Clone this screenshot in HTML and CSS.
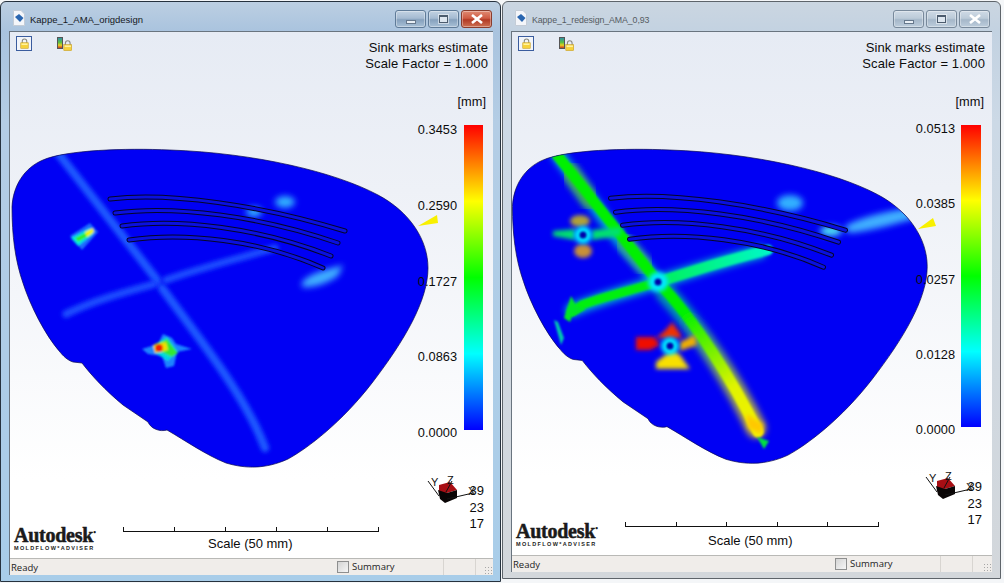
FILE: index.html
```html
<!DOCTYPE html>
<html lang="en">
<head>
<meta charset="utf-8">
<title>Sink marks estimate</title>
<link rel="stylesheet" href="styles.css">
</head>
<body>
<svg class="defs" aria-hidden="true">
  <defs>
    <path id="part" d="M12 207C13 186 24 168 43 160C66 150 125 148 170 150C255 153 335 172 378 195C410 212 428 240 428 268C428 300 405 340 372 383C342 422 308 448 288 459C266 469 246 469 226 463C206 455 186 441 167 430C160 432 151 429 148 422L123 405C105 390 92 376 82 363L73 362C66 360 60 352 60 352C45 335 30 305 23 283C15 260 12 235 12 207Z"/>
    <g id="slots">
      <path d="M110 199C170 192 260 205 345 231"/>
      <path d="M115 213C175 205 260 216 338 243"/>
      <path d="M122 226C180 218 260 228 331 256"/>
      <path d="M129 240C185 232 260 240 323 268"/>
    </g>
    <clipPath id="clip-a"><use href="#part"/></clipPath>
    <clipPath id="clip-b"><use href="#part" transform="translate(500.5 1.8) scale(.997 .988)"/></clipPath>
    <filter id="b1" x="-30%" y="-30%" width="160%" height="160%"><feGaussianBlur stdDeviation="1"/></filter>
    <filter id="b15" x="-30%" y="-30%" width="160%" height="160%"><feGaussianBlur stdDeviation="2"/></filter>
    <filter id="b2" x="-30%" y="-30%" width="160%" height="160%"><feGaussianBlur stdDeviation="2"/></filter>
    <filter id="b3" x="-30%" y="-30%" width="160%" height="160%"><feGaussianBlur stdDeviation="3"/></filter>
    <linearGradient id="lower" gradientUnits="userSpaceOnUse" x1="680" y1="315" x2="760" y2="440">
      <stop offset="0" stop-color="#00f000"/>
      <stop offset=".3" stop-color="#70f000"/>
      <stop offset=".6" stop-color="#e0f400"/>
      <stop offset="1" stop-color="#f8f000"/>
    </linearGradient>
    <linearGradient id="lowerhalo" gradientUnits="userSpaceOnUse" x1="680" y1="315" x2="760" y2="440">
      <stop offset="0" stop-color="#0090b0"/>
      <stop offset=".5" stop-color="#80a060"/>
      <stop offset="1" stop-color="#c8a840"/>
    </linearGradient>
    <linearGradient id="arm" gradientUnits="userSpaceOnUse" x1="650" y1="285" x2="770" y2="250">
      <stop offset="0" stop-color="#00f050"/>
      <stop offset="1" stop-color="#00f8c8"/>
    </linearGradient>
    <symbol id="lock" viewBox="0 0 12 14">
      <path d="M3 7V4a3 3 0 0 1 6 0v3" fill="none" stroke="#8a8a80" stroke-width="1.400"/>
      <rect x="1" y="6" width="10" height="7.500" fill="#f6d23c" stroke="#c49a20" stroke-width=".7"/>
      <rect x="2" y="7" width="8" height="2" fill="#fff2a0"/>
    </symbol>
    <symbol id="doc" viewBox="0 0 12 16">
      <path d="M.5.5H8L11.5 4V15.500H.5Z" fill="#f4f6fa" stroke="#c4ccd6"/>
      <path d="M2 7L6 4L10.500 8L7 12Z" fill="#2a66b0"/>
    </symbol>
    <linearGradient id="iconbar" x1="0" y1="0" x2="0" y2="1">
      <stop offset="0" stop-color="#2a8ab0"/>
      <stop offset=".45" stop-color="#5cc040"/>
      <stop offset=".7" stop-color="#e8d020"/>
      <stop offset="1" stop-color="#c02020"/>
    </linearGradient>
    <symbol id="lockbar" viewBox="0 0 16 14">
      <rect x=".5" y=".5" width="5" height="11" fill="url(#iconbar)" stroke="#555"/>
      <use href="#lock" x="6" y="3" width="9.500" height="11"/>
    </symbol>
    <symbol id="cross" viewBox="0 0 14 10">
      <path d="M2 1L12 9M12 1L2 9" fill="none" stroke="#fff" stroke-width="2.600"/>
    </symbol>
    <g id="triad">
      <path d="M439 485L450 482L457 490L447 493L439 493Z" fill="#a80e14"/>
      <path d="M438 490L447 493L457 490L457 498L445 503L440 499Z" fill="#0a0505"/>
      <g class="axes">
        <path d="M428 481L439 496M446 492L452 481M447 499L473 493"/>
      </g>
      <text class="axis-label" x="431" y="486">Y</text>
      <text class="axis-label" x="447" y="484">Z</text>
      <text class="axis-label" x="468" y="495">X</text>
    </g>
  </defs>
</svg>

<section class="window win-a">
  <header class="titlebar">
    <svg class="doc-icon"><use href="#doc"/></svg>
    <span class="title">Kappe_1_AMA_origdesign</span>
    <div class="caption-buttons">
      <span class="cap-btn"><i class="glyph-min"></i></span>
      <span class="cap-btn"><i class="glyph-max"></i></span>
      <span class="cap-btn cap-close"><svg class="glyph-x"><use href="#cross"/></svg></span>
    </div>
  </header>
  <div class="client">
    <div class="plot">
      <svg class="model" viewBox="10 32 483 526">
        <use href="#part" fill="#0000f4"/>
        <g clip-path="url(#clip-a)">
          <g fill="none" stroke-linecap="round">
            <path filter="url(#b2)" d="M58 153L157 280M162 288C200 340 245 395 265 448" stroke="#1f58ff" stroke-width="8.500"/>
            <path filter="url(#b2)" d="M66 314C95 300 125 292 154 284M166 280C200 268 240 258 275 248" stroke="#1a4eff" stroke-width="7.500"/>
          </g>
          <g filter="url(#b3)">
            <ellipse cx="285" cy="202" rx="10" ry="6" fill="#30b0ff"/>
            <ellipse cx="254" cy="212" rx="8" ry="5" fill="#30b0ff"/>
            <path d="M302 282C312 272 325 270 343 265L338 276C325 285 312 288 302 287Z" fill="#40b0ff"/>
          </g>
          <g filter="url(#b1)">
            <path d="M70 236L90 223L98 232L82 250Z" fill="#1d6cff"/>
            <path d="M71 238L90 228L93 234L78 246Z" fill="#00e8e0"/>
            <path d="M75 238L91 230L92 234L78 242Z" fill="#30f020"/>
            <path d="M85 232L93 228L94 232L87 237Z" fill="#f0f400"/>
          </g>
          <g filter="url(#b1)">
            <path d="M142 349L158 344L163 334L172 338L176 344L192 349L177 352L174 366L166 368L162 356L148 354Z" fill="#1f84ff"/>
            <path d="M153 346L167 337L177 351L168 361L157 354Z" fill="#00d8e0"/>
            <path d="M155 344L167 339L178 353L172 357L160 351Z" fill="#30e830"/>
            <path d="M153 345L166 342L168 350L155 353Z" fill="#f0e000"/>
            <circle cx="159" cy="348" r="4" fill="#f02000"/>
          </g>
        </g>
        <use href="#part" fill="none" stroke="#0a0a50" stroke-width=".7"/>
        <use href="#slots" fill="none" stroke="#05052a" stroke-width="5" stroke-linecap="round"/>
        <use href="#slots" fill="none" stroke="#0a10e0" stroke-width="3" stroke-linecap="round"/>
        <polygon points="418,226 437,215 438,223" fill="#f8f000"/>
        <g class="scale-line">
          <path d="M123 527V531H378V527M174 527V531M225 527V531M276 527V531M327 527V531"/>
        </g>
        <use href="#triad"/>
      </svg>
      <div class="captions">
        <span>Sink marks estimate</span>
        <span>Scale Factor = 1.000</span>
      </div>
      <div class="legend">
        <span class="unit">[mm]</span>
        <div class="legend-body">
          <div class="ticks"><span>0.3453</span><span>0.2590</span><span>0.1727</span><span>0.0863</span><span>0.0000</span></div>
          <div class="ramp"></div>
        </div>
      </div>
      <div class="tools">
        <span class="tool tool-active"><svg class="tool-lock"><use href="#lock"/></svg></span>
        <span class="tool"><svg class="tool-bar"><use href="#lockbar"/></svg></span>
      </div>
      <div class="logo"><span class="logo-main">Autodesk<sup>•</sup></span><span class="logo-sub">MOLDFLOW*ADVISER</span></div>
      <div class="scale-text">Scale (50 mm)</div>
      <div class="coords"><span>39</span><span>23</span><span>17</span></div>
    </div>
    <footer class="status">
      <span class="ready">Ready</span>
      <label class="summary"><i class="check"></i>Summary</label>
      <i class="pane pane-1"></i>
      <i class="pane pane-2"></i>
      <i class="grip"></i>
    </footer>
  </div>
</section>

<section class="window win-b">
  <header class="titlebar">
    <svg class="doc-icon"><use href="#doc"/></svg>
    <span class="title">Kappe_1_redesign_AMA_0,93</span>
    <div class="caption-buttons">
      <span class="cap-btn"><i class="glyph-min"></i></span>
      <span class="cap-btn"><i class="glyph-max"></i></span>
      <span class="cap-btn"><svg class="glyph-x"><use href="#cross"/></svg></span>
    </div>
  </header>
  <div class="client">
    <div class="plot">
      <svg class="model" viewBox="512 32 480 523">
        <use href="#part" fill="#0000f4" transform="translate(500.5 1.8) scale(.997 .988)"/>
        <g clip-path="url(#clip-b)">
          <g fill="none" stroke-linecap="round">
            <path filter="url(#b3)" d="M558 155L620 240L658 282M760 252C720 262 690 272 658 282C625 292 595 300 572 310" stroke="#00a0d0" stroke-width="14"/>
            <path filter="url(#b3)" d="M570 172L590 200" stroke="#40a060" stroke-width="18"/>
            <path filter="url(#b3)" d="M624 242L645 266" stroke="#30a090" stroke-width="17"/>
            <path filter="url(#b3)" d="M665 292C700 330 735 385 756 428" stroke="url(#lowerhalo)" stroke-width="20"/>
            <path filter="url(#b1)" d="M557 155L658 282" stroke="#00f000" stroke-width="10.500"/>
            <path filter="url(#b1)" d="M658 282C695 320 735 385 758 432" stroke="url(#lower)" stroke-width="11"/>
            <path filter="url(#b1)" d="M768 250C725 260 690 272 658 282" stroke="url(#arm)" stroke-width="10.500"/>
            <path filter="url(#b1)" d="M658 282C625 292 600 298 582 305L572 312" stroke="#00f010" stroke-width="9"/>
          </g>
          <g filter="url(#b1)">
            <path d="M564 318L571 296L576 305L586 309L572 316L570 322Z" fill="#00e820"/>
            <path d="M554 320L558 322L564 338L561 345Z" fill="#00c8b0"/>
            <path d="M757 437L769 441L764 449Z" fill="#00e040"/>
          </g>
          <path d="M746 414L763 424L762 434L748 428Z" fill="#ffc800" filter="url(#b2)"/>
          <g filter="url(#b3)">
            <ellipse cx="790" cy="203" rx="13" ry="8" fill="#30b0ff"/>
            <ellipse cx="831" cy="231" rx="11" ry="5" fill="#50e8f0"/>
            <path d="M845 226C865 215 895 209 922 207L926 216C900 222 870 232 848 233Z" fill="#40b0ff"/>
          </g>
          <g filter="url(#b2)">
            <ellipse cx="580" cy="221" rx="10" ry="6" fill="#b0a038"/>
            <ellipse cx="583" cy="251" rx="9" ry="7" fill="#c89038"/>
            <path d="M553 231L575 229V240L553 236Z" fill="#00e070"/>
            <path d="M592 230L622 227L620 236L592 240Z" fill="#00e070"/>
          </g>
          <g filter="url(#b15)">
            <path d="M656 338C664 332 668 328 672 322C676 328 680 332 682 338Z" fill="#f03000"/>
            <path d="M636 337L654 337L660 345L650 350L636 350Z" fill="#f01000"/>
            <path d="M656 362L672 350L680 355L690 369H656Z" fill="#f8e000"/>
            <path d="M680 342L695 335L697 345L680 351Z" fill="#f0b000"/>
          </g>
          <circle cx="583" cy="235" r="9" fill="#00e8ff" filter="url(#b2)"/>
          <circle cx="583" cy="235" r="3.500" fill="#0000a8" filter="url(#b1)"/>
          <circle cx="658" cy="282" r="10" fill="#00e8ff" filter="url(#b2)"/>
          <circle cx="658" cy="282" r="3.500" fill="#0000a8" filter="url(#b1)"/>
          <circle cx="670" cy="346" r="9" fill="#00e8ff" filter="url(#b2)"/>
          <circle cx="670" cy="346" r="3.500" fill="#0000a8" filter="url(#b1)"/>
        </g>
        <use href="#part" fill="none" stroke="#0a0a50" stroke-width=".7" transform="translate(500.5 1.8) scale(.997 .988)"/>
        <g transform="translate(500.5 -.8)">
          <use href="#slots" fill="none" stroke="#05052a" stroke-width="5" stroke-linecap="round"/>
          <use href="#slots" fill="none" stroke="#0a10e0" stroke-width="3" stroke-linecap="round"/>
        </g>
        <polygon points="918,229 933,218 936,226" fill="#f8f000"/>
        <g class="scale-line">
          <path d="M625 522V526H878V522M676 522V526M726 522V526M777 522V526M827 522V526"/>
        </g>
        <use href="#triad" transform="translate(498 -4)"/>
      </svg>
      <div class="captions">
        <span>Sink marks estimate</span>
        <span>Scale Factor = 1.000</span>
      </div>
      <div class="legend">
        <span class="unit">[mm]</span>
        <div class="legend-body">
          <div class="ticks"><span>0.0513</span><span>0.0385</span><span>0.0257</span><span>0.0128</span><span>0.0000</span></div>
          <div class="ramp"></div>
        </div>
      </div>
      <div class="tools">
        <span class="tool tool-active"><svg class="tool-lock"><use href="#lock"/></svg></span>
        <span class="tool"><svg class="tool-bar"><use href="#lockbar"/></svg></span>
      </div>
      <div class="logo"><span class="logo-main">Autodesk<sup>•</sup></span><span class="logo-sub">MOLDFLOW*ADVISER</span></div>
      <div class="scale-text">Scale (50 mm)</div>
      <div class="coords"><span>39</span><span>23</span><span>17</span></div>
    </div>
    <footer class="status">
      <span class="ready">Ready</span>
      <label class="summary"><i class="check"></i>Summary</label>
      <i class="pane pane-1"></i>
      <i class="pane pane-2"></i>
      <i class="grip"></i>
    </footer>
  </div>
</section>
</body>
</html>
```
FILE: styles.css
```css
html, body {
  margin: 0;
  height: 100%;
  overflow: hidden;
  background: #f4f6f8;
  font-family: "Liberation Sans", Arial, sans-serif;
}
.defs { position: absolute; width: 0; height: 0; }

.window {
  position: absolute;
  top: 1px;
  box-sizing: border-box;
  display: flex;
  flex-direction: column;
  border: 1px solid #26323e;
  border-radius: 6px 6px 0 0;
}
.win-a {
  left: 0;
  width: 501px;
  height: 581px;
  background: linear-gradient(#bccfe2 0, #a9c3de 30px, #b4cde5 120px, #a8cde9 100%);
}
.win-b {
  left: 502px;
  width: 499px;
  height: 578px;
  border-color: #5e646a;
  background: linear-gradient(#cbd6e1 0, #c3d2e1 30px, #ccd9e6 120px, #d3d7db 100%);
}
.win-b .title { color: #555b62; font-size: 8.800px; letter-spacing: -.1px; }

.titlebar {
  flex: none;
  height: 29px;
  display: flex;
  align-items: flex-start;
  padding-left: 12px;
  color: #15191e;
  font-size: 9.500px;
}
.doc-icon { width: 12px; height: 16px; margin-top: 8px; }
.title { margin: 11px 0 0 5px; line-height: 14px; }
.caption-buttons {
  margin-left: auto;
  display: flex;
  gap: 2px;
  margin-top: 8px;
  margin-right: 8px;
}
.win-b .caption-buttons { margin-right: 10px; }
.cap-btn {
  box-sizing: border-box;
  width: 31px;
  height: 18px;
  display: flex;
  align-items: center;
  justify-content: center;
  border: 1px solid #5f7b98;
  border-radius: 3px;
  box-shadow: inset 0 0 0 1px rgba(255, 255, 255, .35);
  background: linear-gradient(#c2d2e2, #a5bbd2 45%, #86a1bd 55%, #a8c0d6);
}
.win-b .cap-btn {
  background: linear-gradient(#cfdae5, #bccbd9 45%, #a5b7c9 55%, #bdcddc);
  border-color: #78899b;
}
.cap-close {
  border-color: #8a3c2c;
  background: linear-gradient(#e08a72, #cf5c44 45%, #b23a24 55%, #cd7052);
}
.glyph-min {
  display: block;
  width: 8px;
  height: 2px;
  margin-top: 6px;
  background: #e9eff5;
  border: 1px solid #66788c;
}
.glyph-max {
  box-sizing: border-box;
  display: block;
  width: 9px;
  height: 8px;
  border: 1px solid #4c5c6e;
  border-top-width: 2px;
  background: #dde6ef;
  box-shadow: 0 0 0 1px rgba(255, 255, 255, .5);
}
.glyph-x { width: 14px; height: 10px; }

.client {
  flex: none;
  margin: 0 7px 0 8px;
  height: 544px;
  display: flex;
  flex-direction: column;
  box-sizing: border-box;
  border-left: 1px solid #69747f;
  border-top: 1px solid #69747f;
}
.win-b .client { margin-right: 8px; height: 541px; }

.plot {
  position: relative;
  flex: 1;
  overflow: hidden;
  color: #0c0c0c;
  background: linear-gradient(#e6ebf4, #eef1f7 30%, #fff 85%);
}
.model { position: absolute; inset: 0; width: 100%; height: 100%; }
.scale-line path { fill: none; stroke: #111; stroke-width: 1; shape-rendering: crispEdges; }
.axes path { fill: none; stroke: #111; stroke-width: 1; }
.axis-label { font-family: "Liberation Sans", sans-serif; font-size: 11px; fill: #111; }

.captions {
  position: absolute;
  top: 8px;
  right: 5px;
  display: flex;
  flex-direction: column;
  align-items: flex-end;
  font-size: 13px;
  letter-spacing: .12px;
  line-height: 16px;
}
.win-b .captions { right: 7px; line-height: 15.500px; }

.legend {
  position: absolute;
  top: 63px;
  right: 10px;
  display: flex;
  flex-direction: column;
  align-items: flex-end;
  font-size: 12.800px;
  line-height: 14px;
}
.win-b .legend { right: 11px; top: 63px; }
.unit { position: relative; right: -3px; height: 16px; }
.legend-body { display: flex; align-items: flex-start; gap: 7px; margin-top: 14px; }
.win-b .legend-body { gap: 6px; }
.ticks {
  height: 317px;
  margin-top: -2px;
  display: flex;
  flex-direction: column;
  justify-content: space-between;
  align-items: flex-end;
}
.win-b .ticks { height: 315px; margin-top: -3px; }
.ramp {
  width: 19px;
  height: 305px;
  background: linear-gradient(#f00 0, #ff0 25%, #0f0 50%, #0ff 75%, #00f 100%);
}
.win-b .ramp { width: 20px; height: 302px; }

.tools {
  position: absolute;
  top: 4px;
  left: 6px;
  display: flex;
  gap: 25px;
  align-items: flex-start;
}
.tool { display: flex; align-items: center; justify-content: center; width: 16px; height: 15px; box-sizing: border-box; }
.tool-active { border: 1px solid #3a5c9e; background: #f2f5fa; }
.tool-lock { width: 9px; height: 11px; }
.tool-bar { width: 16px; height: 14px; }

.logo {
  position: absolute;
  left: 4px;
  top: 494px;
  display: flex;
  flex-direction: column;
  color: #1a1a1a;
}
.win-b .logo { top: 490px; }
.logo-main {
  font-family: "Liberation Serif", serif;
  font-weight: 700;
  font-size: 20px;
  line-height: 18px;
  letter-spacing: -.25px;
  -webkit-text-stroke: .5px #1a1a1a;
}
.logo-main sup { font-size: 8px; line-height: 0; vertical-align: 7px; letter-spacing: 0; -webkit-text-stroke: 0; }
.logo-sub {
  font-size: 5.500px;
  font-weight: 700;
  line-height: 8px;
  letter-spacing: 1.350px;
}

.scale-text {
  position: absolute;
  left: 198px;
  top: 504px;
  font-size: 13px;
  line-height: 16px;
}
.win-b .scale-text { left: 196px; top: 501px; }

.coords {
  position: absolute;
  top: 451px;
  right: 9px;
  display: flex;
  flex-direction: column;
  align-items: flex-end;
  font-size: 13px;
  line-height: 16.500px;
}
.win-b .coords { top: 447px; right: 10px; }

.status {
  flex: none;
  position: relative;
  height: 17px;
  display: flex;
  align-items: center;
  box-sizing: border-box;
  border-top: 1px solid #b9b9b6;
  background: #f0edea;
  color: #222;
  font-family: "Open Sans", "Liberation Sans", sans-serif;
  font-size: 9.500px;
}
.ready { margin-left: 1px; }
.summary { position: absolute; left: 327px; top: 2px; display: flex; align-items: center; gap: 3px; line-height: 12px; }
.win-b .summary { left: 323px; }
.check {
  display: block;
  width: 10px;
  height: 10px;
  border: 1px solid #8e8f8f;
  background: linear-gradient(135deg, #d4d4d4, #f6f6f6);
}
.pane { position: absolute; top: 0; bottom: 0; width: 1px; background: #d8d5d1; }
.pane-1 { left: 433px; }
.pane-2 { left: 465px; }
.win-b .pane-1 { left: 428px; }
.win-b .pane-2 { left: 460px; }
.grip {
  position: absolute;
  right: 1px;
  bottom: 1px;
  width: 8px;
  height: 8px;
  background: radial-gradient(circle, #a6a6a6 0 .8px, transparent 1px) 0 0 / 3px 3px;
}
```
